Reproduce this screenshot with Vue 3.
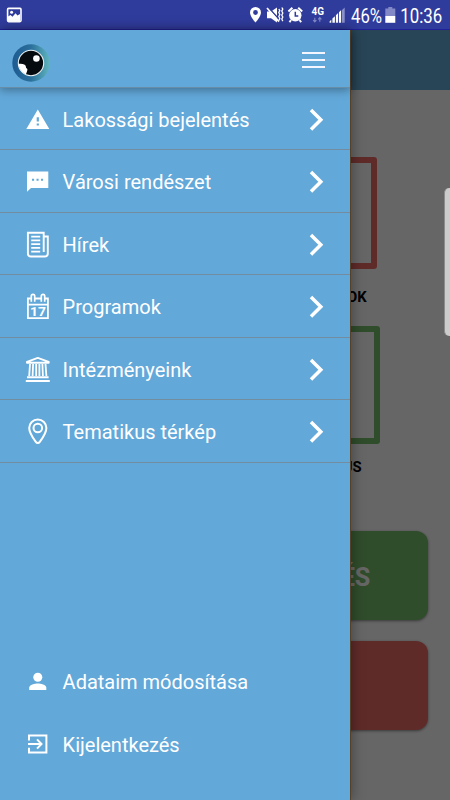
<script setup>
import { ref } from 'vue'

const menuOpen = ref(true)

const menuItems = [
  { icon: 'warning', label: 'Lakossági bejelentés' },
  { icon: 'chat', label: 'Városi rendészet' },
  { icon: 'news', label: 'Hírek' },
  { icon: 'calendar', label: 'Programok' },
  { icon: 'institution', label: 'Intézményeink' },
  { icon: 'pin', label: 'Tematikus térkép' }
]

const accountItems = [
  { icon: 'person', label: 'Adataim módosítása' },
  { icon: 'logout', label: 'Kijelentkezés' }
]

function toggleMenu() {
  menuOpen.value = !menuOpen.value
}
</script>

<template>
  <div class="app">
    <header class="status-bar">
      <svg class="st-photo" width="16" height="16" viewBox="0 0 16 16">
        <rect x="1.600" y="1.400" width="13.400" height="13.200" rx="1" fill="none" stroke="#fff" stroke-width="1.600" />
        <circle cx="5.600" cy="5.300" r="1.500" fill="#fff" />
        <path d="M2 9.500l2.500-1.500 2 1.800 3-3.600 2 2.200L14 7v7H2z" fill="#fff" />
      </svg>
      <svg class="st-icons" width="110" height="30" viewBox="0 0 110 30">
        <path d="M5.500 7a5.500 5.500 0 0 0-5.500 5.500c0 3.900 5.500 10.100 5.500 10.100s5.500-6.200 5.500-10.100A5.500 5.500 0 0 0 5.500 7zm0 3.100a2.400 2.400 0 1 1 0 4.800 2.400 2.400 0 0 1 0-4.800z" fill="#fff" fill-rule="evenodd" />
        <path d="M17 11.500h4l6-4v15l-6-4.300h-4z" fill="#fff" />
        <path d="M18.500 7.500L30 20.500" stroke="#303c9c" stroke-width="1.600" />
        <path d="M17 8L29 21.600" stroke="#fff" stroke-width="1.600" />
        <path d="M28.800 9l1 1.500-1 2 1 2-1 2 1 2-1 2M31.800 7.500l1 1.600-1 2 1 2-1 2 1 2-1 2 1 2" stroke="#fff" stroke-width="1.300" fill="none" />
        <circle cx="45.300" cy="15.300" r="6.200" fill="#fff" />
        <path d="M38.400 11.500l4-3.700M52.200 11.500l-4-3.700M41 20l-1.500 2.200M49.600 20l1.500 2.200" stroke="#fff" stroke-width="2" />
        <path d="M45.300 11.800v4.200h3" stroke="#303c9c" stroke-width="1.500" fill="none" />
        <text x="61.500" y="15.300" class="net" textLength="12.500" lengthAdjust="spacingAndGlyphs">4G</text>
        <path d="M64.800 17.800v4m-1.600-1.600l1.600 1.800 1.600-1.800M69.800 21.800v-4m-1.600 1.600l1.600-1.800 1.600 1.800" stroke="#8289c6" stroke-width="1.100" fill="none" />
        <path d="M91.800 10.300L94.700 7.500v15.300h-2.900z" fill="#8b92ca" />
        <path d="M79.600 22.800v-1.500l1.700-1.500v3zM82.400 22.800v-4.200l2.500-2.400v6.600zM85.900 22.800v-7.600l2.200-2.200v9.800zM89 22.800V12.200l2-2v12.600z" fill="#fff" />
      </svg>
      <svg class="st-time" width="105" height="30" viewBox="0 0 105 30">
        <text x="6" y="22.500" class="clock" textLength="31" lengthAdjust="spacingAndGlyphs">46%</text>
        <path d="M43.300 7h4v1.500h3V16H40.300V8.500h3z" fill="#8289c6" />
        <path d="M40.300 16h10v6.800h-10z" fill="#fff" />
        <text x="55.300" y="22.500" class="clock" textLength="42" lengthAdjust="spacingAndGlyphs">10:36</text>
      </svg>
    </header>

    <div class="page">
      <div class="page-header"></div>
      <main class="content">
        <section class="tile">
          <div class="tile-frame red"></div>
          <span class="tile-label">PROGRAMOK</span>
        </section>
        <section class="tile second">
          <div class="tile-frame green"></div>
          <span class="tile-label">TEMATIKUS</span>
        </section>
        <button class="big-btn green-btn">LAKOSSÁGI BEJELENTÉS</button>
        <button class="big-btn red-btn"></button>
      </main>
    </div>

    <div v-if="menuOpen" class="scrim" @click="toggleMenu"></div>

    <aside v-if="menuOpen" class="drawer">
      <div class="drawer-header">
        <svg class="logo" width="38" height="38" viewBox="0 0 38 38">
          <defs>
            <linearGradient id="ring" x1="0" y1="0" x2="1" y2="0">
              <stop offset="0" stop-color="#1d5a91" />
              <stop offset=".5" stop-color="#2b709c" />
              <stop offset="1" stop-color="#5fb5bd" />
            </linearGradient>
            <clipPath id="eye"><circle cx="19" cy="19" r="12.500" /></clipPath>
          </defs>
          <circle cx="19" cy="19" r="18.700" fill="url(#ring)" />
          <circle cx="19" cy="19" r="12.700" fill="#050b0e" stroke="#e9f1f5" stroke-width="1.100" />
          <g clip-path="url(#eye)" fill="#fff">
            <circle cx="24.400" cy="14.500" r="3.300" />
            <path d="M5 20c5-.8 8.500 0 8.800 2.200.2 1.300.2 1.700 1 2.300 1.200 1 .4 2.500-.3 4.200-.6 1.300-.6 3-1.500 4.300H5z" />
          </g>
        </svg>
        <button class="hamburger" @click="toggleMenu"><i></i><i></i><i></i></button>
      </div>

      <nav class="menu">
        <a v-for="item in menuItems" :key="item.icon" class="menu-item">
          <svg class="icon" width="26" height="28" viewBox="0 0 26 28">
            <path v-if="item.icon === 'warning'" d="M12.800 3.500L24.300 23H1.300zM11.700 11.300v4.300h2.200v-4.300zm0 6.200v2.100h2.200v-2.100z" fill="#fff" fill-rule="evenodd" />
            <path v-else-if="item.icon === 'chat'" d="M2 3.500h21.300V20H6L2 23.700zM7 10.700v2h2.100v-2zm4.500 0v2h2.100v-2zm4.500 0v2h2.100v-2z" fill="#fff" fill-rule="evenodd" />
            <g v-else-if="item.icon === 'news'" fill="none" stroke="#fff">
              <path d="M18.700 21V1.800H2.900v20.700a3 3 0 0 0 3 3h13.900a3 3 0 0 0 3-3V5.500h-4.100v15.500" stroke-width="1.900" />
              <path d="M6.200 5.600h9M6.200 9.400h9M6.200 13.100h9M6.200 16.900h9M6.200 20.600h9" stroke-width="1.900" />
            </g>
            <g v-else-if="item.icon === 'calendar'">
              <path d="M5.800 5.500H2.900v19.600h20V5.500H20M10 5.500h6M2.700 11.700h20.400" fill="none" stroke="#fff" stroke-width="1.800" />
              <path d="M6.300 8.700V3a1.700 1.700 0 0 1 3.400 0V8.700M16.300 8.700V3a1.700 1.700 0 0 1 3.400 0V8.700" fill="none" stroke="#fff" stroke-width="1.700" />
              <text x="5" y="22.900" class="cal-day" textLength="16" lengthAdjust="spacingAndGlyphs">17</text>
            </g>
            <g v-else-if="item.icon === 'institution'" fill="none" stroke="#fff">
              <path d="M2 6.800v-1L12.800 1.900l10.900 3.900v1z" stroke-width="1.900" stroke-linejoin="round" />
              <path d="M5 8L4.200 20M8.100 8l-.5 12M11.200 8v12M14.400 8v12M17.400 8l.5 12M20.500 8l.9 12" stroke-width="1.800" />
              <path d="M2 21.300h21.600M.8 25h24" stroke-width="2" />
            </g>
            <g v-else fill="none" stroke="#fff" stroke-width="2">
              <path d="M12.800 1.400A8.600 8.600 0 0 0 4.200 10c0 5 4 10.300 6.600 13.900 1.100 1.500 2.900 1.500 4 0 2.600-3.600 6.600-8.900 6.600-13.900a8.600 8.600 0 0 0-8.600-8.600z" />
              <circle cx="12.800" cy="10" r="4.300" />
            </g>
          </svg>
          <span class="label">{{ item.label }}</span>
          <svg class="chevron" width="16" height="24" viewBox="0 0 16 24">
            <path d="M2 2L11.800 11.800 2 21.600" fill="none" stroke="#fff" stroke-width="3.500" />
          </svg>
        </a>
      </nav>

      <nav class="account">
        <a v-for="item in accountItems" :key="item.icon" class="menu-item">
          <svg class="icon" width="26" height="28" viewBox="0 0 26 28">
            <g v-if="item.icon === 'person'" fill="#fff">
              <circle cx="12.800" cy="9.200" r="4.500" />
              <path d="M4.200 22v-2.400c0-2.900 5.700-4.200 8.600-4.200s8.500 1.300 8.500 4.200V22z" />
            </g>
            <g v-else fill="none" stroke="#fff" stroke-width="2">
              <path d="M4 9.600V4.500h17.400v16.900H4v-4.600M3 13h13M12 8.400l4.500 4.600-4.500 4.600" />
            </g>
          </svg>
          <span class="label">{{ item.label }}</span>
        </a>
      </nav>
    </aside>

    <div class="edge-handle"></div>
  </div>
</template>

<style>
body {
  margin: 0;
  overflow: hidden;
}
</style>

<style scoped>
.app {
  position: relative;
  width: 450px;
  height: 800px;
  overflow: hidden;
  display: flex;
  flex-direction: column;
  background: #fff;
  font-family: Roboto, "Noto Sans", sans-serif;
}

.status-bar {
  height: 30px;
  flex: none;
  display: flex;
  align-items: center;
  background: #303c9c;
  box-sizing: border-box;
  border-bottom: 1px solid #22209a;
}

.st-photo {
  margin-left: 6px;
}

.st-icons {
  margin-left: 228px;
}

.st-icons,
.st-time {
  flex: none;
  margin-top: 1px;
}

.st-time {
  margin-left: -15px;
}

.clock {
  font-size: 20px;
  fill: #fff;
}

.net {
  font-size: 10px;
  font-weight: 700;
  fill: #fff;
}

.cal-day {
  font-size: 12px;
  font-weight: 700;
  fill: #fff;
}

.page {
  flex: 1;
}

.page-header {
  height: 60px;
  background: #64acda;
}

.content {
  display: flex;
  flex-direction: column;
  padding: 67px 22px 0;
}

.tile {
  align-self: flex-end;
  width: 170px;
  height: 169px;
  margin-right: 22px;
  display: flex;
  flex-direction: column;
  align-items: center;
}

.tile-frame {
  box-sizing: border-box;
  width: 112px;
  height: 112px;
  border: 6px solid #ee6c66;
  border-radius: 3px;
}

.tile-frame.green {
  width: 118px;
  height: 118px;
  border-color: #76be6c;
}

.tile-label {
  margin-top: 20px;
  font-size: 14.8px;
  line-height: 17px;
  font-weight: 700;
  color: #000;
}

.tile.second {
  height: 205px;
}

.second .tile-label {
  margin-top: 15px;
}

.big-btn {
  height: 89px;
  width: 405.5px;
  margin: 0 0 21px;
  padding: 3px 0 0;
  border: none;
  border-radius: 12px;
  color: #fff;
  font-family: inherit;
  font-size: 25.2px;
  font-weight: 700;
  box-shadow: 0 1px 3px rgba(0, 0, 0, 0.45);
}

.green-btn {
  background: #76be6c;
}

.red-btn {
  background: #ee6c66;
}

.scrim {
  position: absolute;
  inset: 30px 0 0;
  background: rgba(0, 0, 0, 0.6);
}

.drawer {
  position: absolute;
  top: 30px;
  bottom: 0;
  left: 0;
  width: 350px;
  display: flex;
  flex-direction: column;
  background: #62a8d9;
  box-shadow: 1px 0 0 #55402a, 2px 0 12px rgba(0, 0, 0, 0.35);
}

.drawer-header {
  height: 57.6px;
  flex: none;
  display: flex;
  align-items: center;
  justify-content: space-between;
  box-sizing: border-box;
  padding: 9px 25px 0 12px;
  border-bottom: 1px solid #688da7;
  box-shadow: 0 2px 9px rgba(0, 0, 0, 0.35);
}

.hamburger {
  display: flex;
  flex-direction: column;
  gap: 5px;
  width: 23px;
  margin-top: -6px;
  padding: 0;
  border: none;
  background: none;
}

.hamburger i {
  height: 2px;
  background: #f4f6ff;
}

.menu-item {
  display: flex;
  align-items: center;
  height: 62.5px;
  box-sizing: border-box;
  padding: 2px 25px 0 24.6px;
  color: #fff;
}

.menu .menu-item {
  padding-top: 2.8px;
  border-bottom: 1px solid #728ca0;
}

.icon {
  flex: none;
  margin-right: 12px;
}

.label {
  flex: 1;
  font-size: 20px;
  line-height: 26px;
  white-space: nowrap;
}

.account {
  margin-top: auto;
  padding-bottom: 25px;
}

.edge-handle {
  position: absolute;
  top: 188px;
  right: -6px;
  width: 11px;
  height: 148px;
  border: 1px solid #8c8c8c;
  border-width: 0 0 0 1px;
  border-radius: 5px;
  background: #ccc;
}
</style>
